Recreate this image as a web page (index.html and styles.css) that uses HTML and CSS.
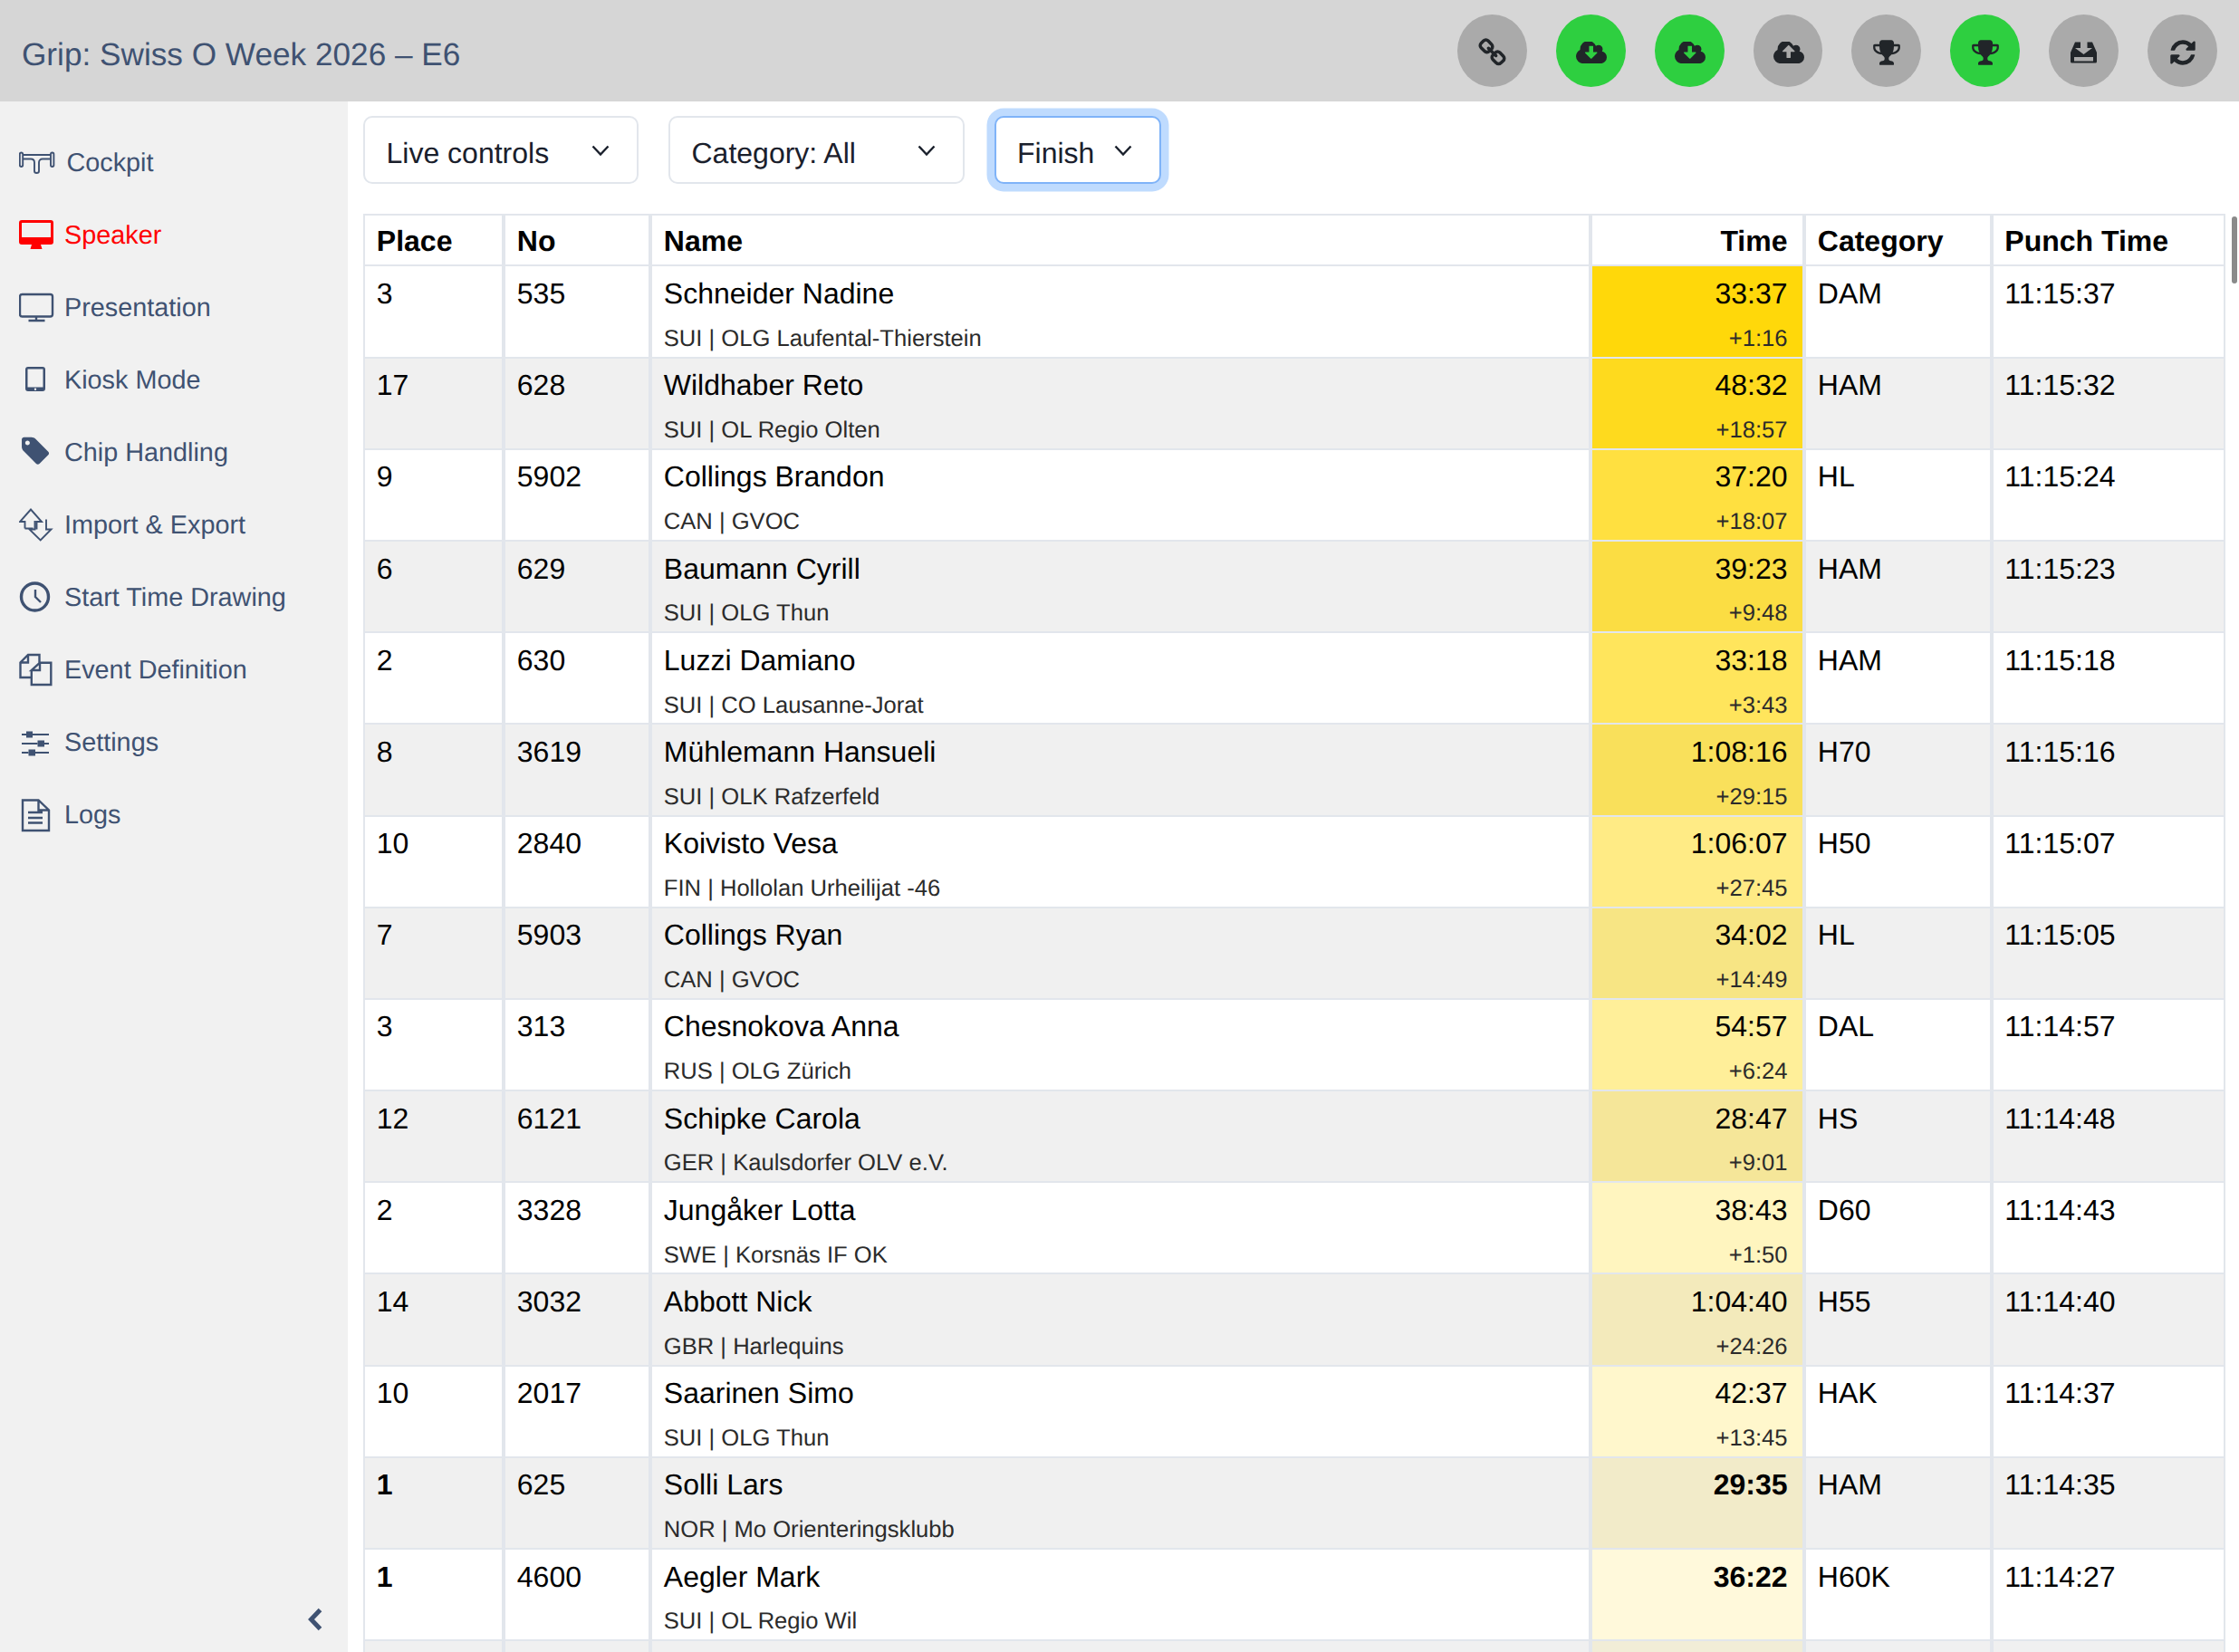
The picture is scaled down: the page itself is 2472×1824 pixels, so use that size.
FILE: index.html
```html
<!DOCTYPE html>
<html lang="en">
<head>
<meta charset="utf-8">
<title>Grip: Swiss O Week 2026 – E6</title>
<link rel="stylesheet" href="styles.css">
</head>
<body>
<header class="topbar">
  <h1 class="title">Grip: Swiss O Week 2026 – E6</h1>
  <div class="actions">
    <button class="btn"><svg class="ic-link" viewBox="0 0 1792 1792"><path d="M1520 1216q0-40-28-68l-208-208q-28-28-68-28-42 0-72 32 3 3 19 18.5t21.5 21.5 15 19 13 25.5 3.5 27.5q0 40-28 68t-68 28q-15 0-27.5-3.5t-25.5-13-19-15-21.5-21.5-18.5-19q-33 31-33 73 0 40 28 68l206 207q27 27 68 27 40 0 68-26l147-146q28-28 28-67zm-703-705q0-40-28-68l-206-207q-28-28-68-28-39 0-68 27l-147 146q-28 28-28 67 0 40 28 68l208 208q27 27 68 27 42 0 72-31-3-3-19-18.5t-21.5-21.5-15-19-13-25.5-3.5-27.5q0-40 28-68t68-28q15 0 27.5 3.5t25.5 13 19 15 21.5 21.5 18.5 19q33-31 33-73zm895 705q0 120-85 203l-147 146q-83 83-203 83-121 0-204-85l-206-207q-83-83-83-203 0-123 88-209l-88-88q-86 88-208 88-120 0-204-84l-208-208q-84-84-84-204t85-203l147-146q83-83 203-83 121 0 204 85l206 207q83 83 83 203 0 123-88 209l88 88q86-88 208-88 120 0 204 84l208 208q84 84 84 204z"/></svg></button>
    <button class="btn on"><svg class="ic-cloud" viewBox="-64 256 1920 1360"><path fill-rule="evenodd" d="M1264 936q0-14-9-23t-23-9h-224v-352q0-13-9.500-22.500t-22.500-9.500h-192q-13 0-22.500 9.500t-9.500 22.500v352h-224q-14 0-23 9t-9 23q0 12 10 24l352 352q9 9 23 9t23-9l351-351q10-12 10-25zm592 296q0 159-112.500 271.500t-271.500 112.500h-1088q-185 0-316.500-131.500t-131.500-316.500q0-130 70-240t188-165q-2-30-2-43 0-212 150-362t362-150q156 0 285.500 87t188.500 231q71-62 166-62 106 0 181 75t75 181q0 76-41 138 130 31 213.500 135.500t83.500 238.500z"/></svg></button>
    <button class="btn on"><svg class="ic-cloud" viewBox="-64 256 1920 1360"><path fill-rule="evenodd" d="M1264 936q0-14-9-23t-23-9h-224v-352q0-13-9.500-22.500t-22.500-9.500h-192q-13 0-22.500 9.500t-9.500 22.500v352h-224q-14 0-23 9t-9 23q0 12 10 24l352 352q9 9 23 9t23-9l351-351q10-12 10-25zm592 296q0 159-112.500 271.500t-271.500 112.500h-1088q-185 0-316.500-131.500t-131.500-316.500q0-130 70-240t188-165q-2-30-2-43 0-212 150-362t362-150q156 0 285.500 87t188.500 231q71-62 166-62 106 0 181 75t75 181q0 76-41 138 130 31 213.500 135.500t83.500 238.500z"/></svg></button>
    <button class="btn"><svg class="ic-cloud" viewBox="-64 256 1920 1360"><path fill-rule="evenodd" d="M1264 856q0-14-9-23l-352-352q-9-9-23-9t-23 9l-351 351q-10 12-10 24 0 14 9 23t23 9h224v352q0 13 9.500 22.500t22.500 9.500h192q13 0 22.500-9.500t9.500-22.500v-352h224q13 0 22.500-9.500t9.500-22.500zm592 376q0 159-112.500 271.500t-271.500 112.500h-1088q-185 0-316.500-131.500t-131.500-316.500q0-130 70-240t188-165q-2-30-2-43 0-212 150-362t362-150q156 0 285.500 87t188.500 231q71-62 166-62 106 0 181 75t75 181q0 76-41 138 130 31 213.500 135.500t83.500 238.500z"/></svg></button>
    <button class="btn"><svg class="ic-trophy" viewBox="0 0 1792 1792"><path d="M522 883q-74-162-74-371h-256v96q0 78 94.500 162t235.500 113zm1078-275v-96h-256q0 209-74 371 141-29 235.500-113t94.500-162zm128-128v128q0 71-41.500 143t-112 130-173 97.500-215.500 44.500q-42 54-95 95-38 34-52.500 72.500t-14.500 89.500q0 54 30.500 91t97.500 37q75 0 133.500 45.500t58.500 114.500v64q0 14-9 23t-23 9h-832q-14 0-23-9t-9-23v-64q0-69 58.500-114.500t133.500-45.500q67 0 97.500-37t30.500-91q0-51-14.500-89.500t-52.500-72.500q-53-41-95-95-113-5-215.500-44.500t-173-97.500-112-130-41.500-143v-128q0-40 28-68t68-28h288v-96q0-66 47-113t113-47h576q66 0 113 47t47 113v96h288q40 0 68 28t28 68z"/></svg></button>
    <button class="btn on"><svg class="ic-trophy" viewBox="0 0 1792 1792"><path d="M522 883q-74-162-74-371h-256v96q0 78 94.500 162t235.500 113zm1078-275v-96h-256q0 209-74 371 141-29 235.500-113t94.500-162zm128-128v128q0 71-41.500 143t-112 130-173 97.500-215.500 44.500q-42 54-95 95-38 34-52.500 72.500t-14.500 89.500q0 54 30.500 91t97.500 37q75 0 133.500 45.500t58.500 114.500v64q0 14-9 23t-23 9h-832q-14 0-23-9t-9-23v-64q0-69 58.500-114.500t133.500-45.500q67 0 97.500-37t30.500-91q0-51-14.500-89.500t-52.500-72.500q-53-41-95-95-113-5-215.500-44.500t-173-97.500-112-130-41.500-143v-128q0-40 28-68t68-28h288v-96q0-66 47-113t113-47h576q66 0 113 47t47 113v96h288q40 0 68 28t28 68z"/></svg></button>
    <button class="btn"><svg class="ic-tray" viewBox="0 0 29 24"><path fill-rule="evenodd" d="M5 .5h6v6.500H5l9.500 7 9.500-7h-5.500V.5H24L29 12v10a1.500 1.500 0 0 1-1.500 1.500h-26A1.500 1.500 0 0 1 0 22V12zM4 17v4.500h21V17z"/></svg></button>
    <button class="btn"><svg class="ic-trophy" viewBox="0 0 1792 1792"><path d="M1639 1056q0 5-1 7-64 268-268 434.500t-478 166.500q-146 0-282.500-55t-243.500-157l-129 129q-19 19-45 19t-45-19-19-45v-448q0-26 19-45t45-19h448q26 0 45 19t19 45-19 45l-137 137q71 66 161 102t187 36q134 0 250-65t186-179q11-17 53-117 8-23 30-23h192q13 0 22.500 9.500t9.500 22.500zm25-800v448q0 26-19 45t-45 19h-448q-26 0-45-19t-19-45 19-45l138-138q-148-137-349-137-134 0-250 65t-186 179q-11 17-53 117-8 23-30 23h-199q-13 0-22.500-9.500t-9.500-22.500v-7q65-268 270-434.500t480-166.500q146 0 284 55.500t245 156.500l130-129q19-19 45-19t45 19 19 45z"/></svg></button>
  </div>
</header>
<div class="shell">
  <aside class="sidebar">
    <nav class="nav">
      <a class="nav-item nav-cockpit"><svg class="nav-ic stroke thin" viewBox="0 0 40 40"><rect x=".8" y="9.500" width="3.400" height="15.500" rx="1.700"/><rect x="35" y="9.500" width="3.400" height="15.500" rx="1.700"/><path d="M4.200 12h30.800M4.200 16.500h8.800c2.500 0 4 1.500 4 4v9.500c0 1.500 1 2 2.500 2s2.500-.5 2.500-2v-9.500c0-2.500 1.500-4 4-4h8.700"/></svg><span>Cockpit</span></a>
      <a class="nav-item active"><svg class="nav-ic fill" viewBox="0 0 40 40"><path fill-rule="evenodd" d="M3 4h32a3 3 0 0 1 3 3v21a3 3 0 0 1-3 3H24l1.500 5h-13L14 31H3a3 3 0 0 1-3-3V7a3 3 0 0 1 3-3zM3 7v16h32V7z"/></svg><span>Speaker</span></a>
      <a class="nav-item"><svg class="nav-ic stroke" viewBox="0 0 40 40"><rect x="1" y="6" width="36" height="24.500" rx="2.500"/><path d="M19 30.500v4.500M10.500 35h18"/></svg><span>Presentation</span></a>
      <a class="nav-item"><svg class="nav-ic fill" viewBox="0 0 40 40"><path fill-rule="evenodd" d="M10 6h16a3 3 0 0 1 3 3v21a3 3 0 0 1-3 3H10a3 3 0 0 1-3-3V9a3 3 0 0 1 3-3zM9.500 8.500v20h17v-20zM18 29.500a1.200 1.200 0 1 0 0 2.400 1.200 1.200 0 0 0 0-2.400z"/></svg><span>Kiosk Mode</span></a>
      <a class="nav-item"><svg class="nav-ic fill" viewBox="0 0 40 40"><g transform="translate(.5 1.200) scale(.0198)"><path d="M576 448q0-53-37.500-90.500t-90.500-37.500-90.500 37.500-37.500 90.500 37.500 90.500 90.500 37.500 90.500-37.500 37.500-90.500zm1067 576q0 53-37 90l-491 492q-39 37-91 37-53 0-90-37l-715-716q-38-37-64.500-101t-26.500-117v-416q0-52 38-90t90-38h416q53 0 117 26.500t102 64.500l715 714q37 39 37 91z"/></g></svg><span>Chip Handling</span></a>
      <a class="nav-item"><svg class="nav-ic stroke thin" viewBox="0 0 40 40"><path d="M6.500 24.500V17H1L13 3.500 25 17h-5.500v8.500M30 14.500v11h5.500L23.700 37.500 11.500 25.500h6V16M6.500 24.500h9"/></svg><span>Import &amp; Export</span></a>
      <a class="nav-item"><svg class="nav-ic stroke" viewBox="0 0 40 40"><circle class="wide" cx="17.500" cy="20" r="15"/><path d="M18 12v8l6 6"/></svg><span>Start Time Drawing</span></a>
      <a class="nav-item"><svg class="nav-ic stroke" viewBox="0 0 40 40"><path d="M13 29H1.500V12.500L10 4h12.500v8.500M10 4v8.500H1.500M13.800 21V37h21.500V12.700H23L13.800 21H23v-8.300"/></svg><span>Event Definition</span></a>
      <a class="nav-item"><svg class="nav-ic stroke thin-2" viewBox="0 0 40 40"><path d="M3 12h5M15 12h18M3 22h17.500M28 22h5M3 32h7.500M18 32h15"/><path class="solid" d="M8 8.500h7v7H8zM20.500 18.500H28v7h-7.500zM10.500 28.500H18v7h-7.500z"/></svg><span>Settings</span></a>
      <a class="nav-item"><svg class="nav-ic stroke" viewBox="0 0 40 40"><path d="M4 4.500h17.500L33 15.500v22.500H4zM21.500 4.500v11H33M10 18h16M10 24h16M10 29.500h16"/></svg><span>Logs</span></a>
    </nav>
    <div class="collapse"><svg class="chev" viewBox="0 0 18 26"><path d="M14.500 2.500L4.500 13l10 10.500"/></svg></div>
  </aside>
  <main class="main">
    <div class="filters">
      <div class="select sel-live"><span>Live controls</span><svg class="caret" viewBox="0 0 20 12"><path d="M1.500 1.500L10 10.500l8.500-9"/></svg></div>
      <div class="select sel-cat"><span>Category: All</span><svg class="caret" viewBox="0 0 20 12"><path d="M1.500 1.500L10 10.500l8.500-9"/></svg></div>
      <div class="select sel-finish focus"><span>Finish</span><svg class="caret" viewBox="0 0 20 12"><path d="M1.500 1.500L10 10.500l8.500-9"/></svg></div>
    </div>
    <div class="table-wrap">
      <table class="results">
        <colgroup><col class="c-place"><col class="c-no"><col class="c-name"><col class="c-time"><col class="c-cat"><col class="c-punch"></colgroup>
        <thead><tr><th>Place</th><th>No</th><th>Name</th><th class="right">Time</th><th>Category</th><th>Punch Time</th></tr></thead>
        <tbody>
          <tr><td>3</td><td>535</td><td><div>Schneider Nadine</div><div class="sub">SUI | OLG Laufental-Thierstein</div></td><td class="time" style="--a:.96"><div>33:37</div><div class="sub">+1:16</div></td><td>DAM</td><td>11:15:37</td></tr>
          <tr><td>17</td><td>628</td><td><div>Wildhaber Reto</div><div class="sub">SUI | OL Regio Olten</div></td><td class="time" style="--a:.88"><div>48:32</div><div class="sub">+18:57</div></td><td>HAM</td><td>11:15:32</td></tr>
          <tr><td>9</td><td>5902</td><td><div>Collings Brandon</div><div class="sub">CAN | GVOC</div></td><td class="time" style="--a:.75"><div>37:20</div><div class="sub">+18:07</div></td><td>HL</td><td>11:15:24</td></tr>
          <tr><td>6</td><td>629</td><td><div>Baumann Cyrill</div><div class="sub">SUI | OLG Thun</div></td><td class="time" style="--a:.72"><div>39:23</div><div class="sub">+9:48</div></td><td>HAM</td><td>11:15:23</td></tr>
          <tr><td>2</td><td>630</td><td><div>Luzzi Damiano</div><div class="sub">SUI | CO Lausanne-Jorat</div></td><td class="time" style="--a:.64"><div>33:18</div><div class="sub">+3:43</div></td><td>HAM</td><td>11:15:18</td></tr>
          <tr><td>8</td><td>3619</td><td><div>Mühlemann Hansueli</div><div class="sub">SUI | OLK Rafzerfeld</div></td><td class="time" style="--a:.62"><div>1:08:16</div><div class="sub">+29:15</div></td><td>H70</td><td>11:15:16</td></tr>
          <tr><td>10</td><td>2840</td><td><div>Koivisto Vesa</div><div class="sub">FIN | Hollolan Urheilijat -46</div></td><td class="time" style="--a:.48"><div>1:06:07</div><div class="sub">+27:45</div></td><td>H50</td><td>11:15:07</td></tr>
          <tr><td>7</td><td>5903</td><td><div>Collings Ryan</div><div class="sub">CAN | GVOC</div></td><td class="time" style="--a:.45"><div>34:02</div><div class="sub">+14:49</div></td><td>HL</td><td>11:15:05</td></tr>
          <tr><td>3</td><td>313</td><td><div>Chesnokova Anna</div><div class="sub">RUS | OLG Zürich</div></td><td class="time" style="--a:.40"><div>54:57</div><div class="sub">+6:24</div></td><td>DAL</td><td>11:14:57</td></tr>
          <tr><td>12</td><td>6121</td><td><div>Schipke Carola</div><div class="sub">GER | Kaulsdorfer OLV e.V.</div></td><td class="time" style="--a:.36"><div>28:47</div><div class="sub">+9:01</div></td><td>HS</td><td>11:14:48</td></tr>
          <tr><td>2</td><td>3328</td><td><div>Jungåker Lotta</div><div class="sub">SWE | Korsnäs IF OK</div></td><td class="time" style="--a:.25"><div>38:43</div><div class="sub">+1:50</div></td><td>D60</td><td>11:14:43</td></tr>
          <tr><td>14</td><td>3032</td><td><div>Abbott Nick</div><div class="sub">GBR | Harlequins</div></td><td class="time" style="--a:.22"><div>1:04:40</div><div class="sub">+24:26</div></td><td>H55</td><td>11:14:40</td></tr>
          <tr><td>10</td><td>2017</td><td><div>Saarinen Simo</div><div class="sub">SUI | OLG Thun</div></td><td class="time" style="--a:.2"><div>42:37</div><div class="sub">+13:45</div></td><td>HAK</td><td>11:14:37</td></tr>
          <tr><td class="lead">1</td><td>625</td><td><div>Solli Lars</div><div class="sub">NOR | Mo Orienteringsklubb</div></td><td class="time" style="--a:.16"><div class="lead">29:35</div><div class="sub">&nbsp;</div></td><td>HAM</td><td>11:14:35</td></tr>
          <tr><td class="lead">1</td><td>4600</td><td><div>Aegler Mark</div><div class="sub">SUI | OL Regio Wil</div></td><td class="time" style="--a:.14"><div class="lead">36:22</div><div class="sub">&nbsp;</div></td><td>H60K</td><td>11:14:27</td></tr>
          <tr><td></td><td></td><td><div>&nbsp;</div><div class="sub">&nbsp;</div></td><td class="time" style="--a:.1"></td><td></td><td></td></tr>
        </tbody>
      </table>
      <div class="thumb"></div>
    </div>
  </main>
</div>
</body>
</html>
```
FILE: styles.css
```css
* { box-sizing: border-box; }
html, body { margin: 0; height: 100%; }
body {
  width: 2472px;
  height: 1824px;
  overflow: hidden;
  font-family: "Liberation Sans", Arial, sans-serif;
  font-size: 32px;
  line-height: 48px;
  color: #000;
  background: #fff;
  display: flex;
  flex-direction: column;
  text-rendering: geometricPrecision;
}

/* top bar */
.topbar {
  flex: none;
  height: 112px;
  background: #d6d6d6;
  display: flex;
  align-items: center;
  justify-content: space-between;
  padding: 0 24px;
}
.title {
  margin: 9px 0 0;
  font-size: 35.2px;
  font-weight: 400;
  color: #3f5272;
}
.actions { display: flex; gap: 32px; }
.btn {
  width: 76.9px;
  height: 80px;
  border: 0;
  border-radius: 50%;
  background: #aaa;
  padding: 4px 0 0;
  display: flex;
  align-items: center;
  justify-content: center;
}
.btn.on { background: #2ecf40; }
.btn svg { fill: #212529; display: block; }
.ic-link { width: 33px; height: 33px; }
.ic-cloud { width: 34px; height: 24.1px; margin-left: 2px; }
.ic-trophy { width: 32px; height: 32px; }
.ic-tray { width: 29px; height: 24px; }

/* layout */
.shell { flex: 1; display: flex; min-height: 0; }
.sidebar {
  flex: none;
  width: 384px;
  background: #f1f1f1;
  display: flex;
  flex-direction: column;
  justify-content: space-between;
  padding: 27px 0 23px;
}
.nav { display: flex; flex-direction: column; }
.nav-item {
  display: flex;
  align-items: center;
  height: 80px;
  padding-left: 21px;
  gap: 10px;
  font-size: 28.8px;
  color: #3f5272;
}
.nav-item span { padding-top: 1.500px; }
.nav-item.active { color: #f00; }
.nav-cockpit { gap: 12.500px; }
.nav-ic { width: 40px; height: 40px; flex: none; display: block; }
.nav-ic.fill { fill: currentColor; }
.nav-ic.stroke { fill: none; stroke: currentColor; stroke-width: 2.4; }
.nav-ic.thin { stroke-width: 1.9; }
.nav-ic.thin-2 { stroke-width: 2; }
.nav-ic .wide { stroke-width: 3.4; }
.nav-ic .solid { fill: currentColor; stroke: none; }
.collapse { padding-left: 339px; height: 26px; }
.chev { display: block; width: 18px; height: 26px; fill: none; stroke: #3f5272; stroke-width: 5; }

/* main */
.main { flex: 1; min-width: 0; padding: 16px 0 0 17px; display: flex; flex-direction: column; overflow: hidden; }
.filters { flex: none; display: flex; gap: 33px; height: 75px; margin-bottom: 33px; }
.select {
  display: flex;
  align-items: center;
  justify-content: space-between;
  height: 75px;
  padding: 0 30px 0 23.500px;
  border: 2px solid #e2e6ec;
  border-radius: 10px;
  background: #fff;
  color: #1a202c;
}
.select span { display: block; margin-top: 6px; }
.sel-live { width: 304px; }
.sel-cat { width: 326.500px; }
.sel-finish { width: 184px; }
.select.focus { border-color: #7fb3f8; box-shadow: 0 0 0 8.500px #bfdbfe; }
.caret { width: 20px; height: 12px; fill: none; stroke: #1a202c; stroke-width: 2.4; display: block; }

.table-wrap { flex: 1; min-height: 0; position: relative; overflow: hidden; }
.results {
  table-layout: fixed;
  width: 2055.5px;
  border-collapse: separate;
  border-spacing: 0;
}
.c-place { width: 155px; }
.c-no { width: 162px; }
.c-name { width: 1038px; }
.c-time { width: 236px; }
.c-cat { width: 206.500px; }
.c-punch { width: 258px; }

.results th, .results td {
  border: 2px solid #e2e6ec;
  border-width: 0 2px 2px;
  padding: 5.600px 12.800px 0;
  text-align: left;
  vertical-align: top;
  font-weight: 400;
  background-clip: padding-box;
}
.results th {
  border-top-width: 2px;
  padding: 4px 12.800px 2.400px;
  font-weight: 700;
}
.results th.right { text-align: right; padding-right: 16.500px; }
.results tbody tr:nth-child(even) { background: #f0f0f0; }
.results td.time {
  text-align: right;
  padding-right: 16.500px;
  background-color: rgba(255, 214, 0, var(--a));
}
.sub {
  font-size: 25.600px;
  line-height: 38px;
  padding: 6.800px 0 .800px;
  color: #2b2b2b;
}
.results td.lead, .lead { font-weight: 700; }
.thumb {
  position: absolute;
  top: 3px;
  right: 2.500px;
  width: 6px;
  height: 74px;
  border-radius: 3px;
  background: #8a8a8a;
}
```
